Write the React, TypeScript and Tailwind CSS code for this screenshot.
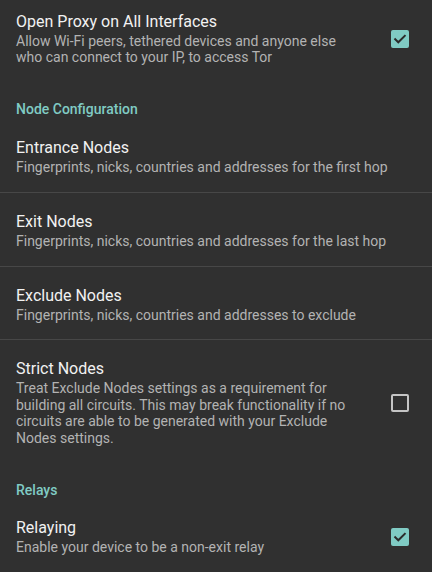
import React from 'react';

type Pref = {
  title: string;
  summary: string;
  checkbox?: boolean;
  checked?: boolean;
  divider?: boolean;
  first?: boolean;
};

type Section = {
  header?: string;
  items: Pref[];
};

const sections: Section[] = [
  {
    items: [
      {
        title: 'Open Proxy on All Interfaces',
        summary: 'Allow Wi-Fi peers, tethered devices and anyone else who can connect to your IP, to access Tor',
        checkbox: true,
        checked: true,
        first: true,
      },
    ],
  },
  {
    header: 'Node Configuration',
    items: [
      { title: 'Entrance Nodes', summary: 'Fingerprints, nicks, countries and addresses for the first hop', divider: true },
      { title: 'Exit Nodes', summary: 'Fingerprints, nicks, countries and addresses for the last hop', divider: true },
      { title: 'Exclude Nodes', summary: 'Fingerprints, nicks, countries and addresses to exclude', divider: true },
      {
        title: 'Strict Nodes',
        summary:
          'Treat Exclude Nodes settings as a requirement for building all circuits. This may break functionality if no circuits are able to be generated with your Exclude Nodes settings.',
        checkbox: true,
        checked: false,
      },
    ],
  },
  {
    header: 'Relays',
    items: [
      {
        title: 'Relaying',
        summary: 'Enable your device to be a non-exit relay',
        checkbox: true,
        checked: true,
        divider: true,
      },
    ],
  },
];

function CheckBox({ checked }: { checked?: boolean }) {
  if (checked) {
    return (
      <div className="w-[18px] h-[18px] rounded-[2px] bg-[#80cbc4] flex items-center justify-center">
        <svg width="14" height="14" viewBox="0 0 14 14" fill="none">
          <path d="M2.2 7.2l3.1 3.1L11.8 3.8" stroke="#2b2b2b" strokeWidth="2" strokeLinecap="square" />
        </svg>
      </div>
    );
  }
  return <div className="w-[18px] h-[18px] rounded-[2px] border-2 border-[#c4c4c4]" />;
}

function PrefRow({ pref }: { pref: Pref }) {
  return (
    <>
      <div className={`flex items-center pl-4 ${pref.first ? 'pt-[12px]' : 'pt-[19px]'} pb-[16.5px]`}>
        <div className="flex-1 min-w-0">
          <div className="text-[16px] leading-[19px] text-[#f2f2f2]">{pref.title}</div>
          <div className="mt-[2px] text-[14px] leading-[16.4px] text-[#b3b3b3]">{pref.summary}</div>
        </div>
        {pref.checkbox && (
          <div className="ml-[29px] mr-[23px] shrink-0">
            <CheckBox checked={pref.checked} />
          </div>
        )}
      </div>
      {pref.divider && <div className="h-px bg-[#474747]" />}
    </>
  );
}

export default function App() {
  return (
    <div
      className="w-[432px] h-[572px] overflow-hidden bg-[#303030]"
      style={{ fontFamily: 'Roboto, "Noto Sans", sans-serif' }}
    >
      {sections.map((section, i) => (
        <div key={i}>
          {section.header && (
            <div className="pl-4 pt-[19px] pb-px text-[14px] leading-[16.4px] font-medium text-[#80cbc4]">
              {section.header}
            </div>
          )}
          {section.items.map((pref) => (
            <PrefRow key={pref.title} pref={pref} />
          ))}
        </div>
      ))}
    </div>
  );
}
